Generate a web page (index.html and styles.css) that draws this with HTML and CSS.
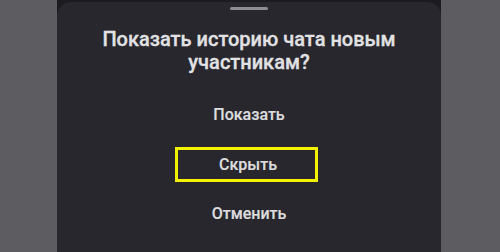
FILE: index.html
```html
<!DOCTYPE html>
<html lang="ru">

<head>
    <meta charset="UTF-8">
    <title>chat history</title>
    <link rel="stylesheet" href="styles.css">
</head>

<body>
    <div class="screen">
        <div class="phone">
            <div class="behind"></div>
            <div class="sheet">
                <div class="handle"></div>
                <h1 class="title">Показать историю чата новым участникам?</h1>
                <div class="actions">
                    <div class="action">Показать</div>
                    <div class="action marked">Скрыть</div>
                    <div class="action">Отменить</div>
                </div>
            </div>
        </div>
    </div>
</body>

</html>
```

FILE: styles.css
```css
html,
body {
    margin: 0;
    padding: 0;
}

body {
    background: #5d5c61;
    font-family: Roboto, "Noto Sans", sans-serif;
}

.screen {
    width: 500px;
    height: 252px;
    display: flex;
    justify-content: center;
    overflow: hidden;
}

.phone {
    width: 384px;
    margin-left: -2px;
    background: #1b1b20;
    display: flex;
    flex-direction: column;
}

.behind {
    height: 2px;
}

.sheet {
    flex: 1;
    background: #27272d;
    border-radius: 14px 14px 0 0;
    display: flex;
    flex-direction: column;
    align-items: center;
}

.handle {
    width: 38px;
    height: 3px;
    border-radius: 2px;
    background: #8d8d93;
    margin-top: 5px;
}

.title {
    margin: 18px 0 0;
    width: 320px;
    font-size: 20px;
    font-weight: 500;
    line-height: 23px;
    text-align: center;
    color: #e2e2e4;
    -webkit-text-stroke: 0.3px #e2e2e4;
}

.actions {
    margin-top: 32px;
    display: flex;
    flex-direction: column;
    align-items: center;
    gap: 23px;
}

.action {
    font-size: 16px;
    font-weight: 500;
    line-height: 18px;
    color: #dcdcde;
    -webkit-text-stroke: 0.2px #dcdcde;
}

.marked {
    width: 134px;
    height: 29px;
    margin-right: 5px;
    padding-left: 3px;
    line-height: 29px;
    text-align: center;
    border: 3px solid #f2f200;
}
```
